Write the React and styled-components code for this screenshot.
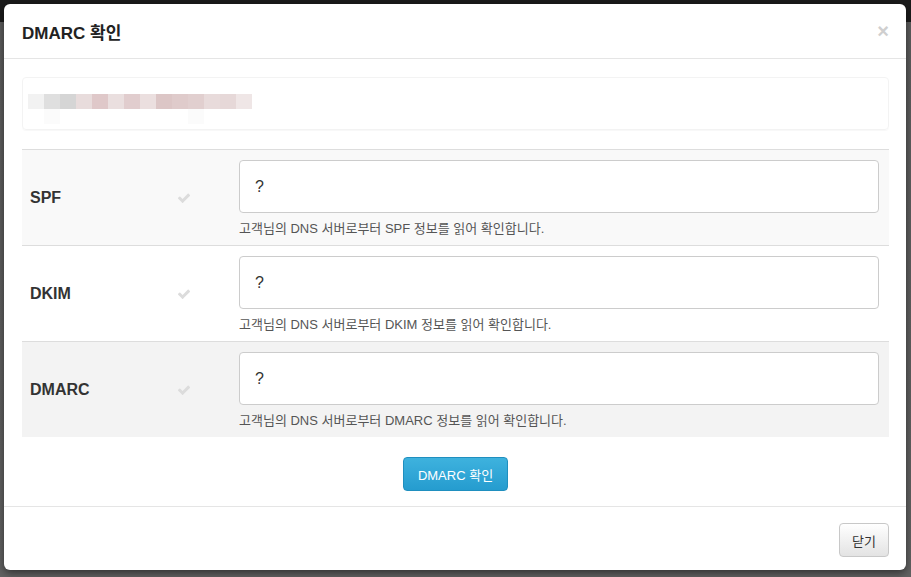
import React from "react";
import styled, { createGlobalStyle } from "styled-components";

const Global = createGlobalStyle`
  html, body { margin: 0; padding: 0; }
  body {
    width: 911px; height: 577px; overflow: hidden;
    background: #5f5f5f;
    font-family: "Liberation Sans", Arial, "Noto Sans CJK KR", sans-serif;
    color: #333;
  }
`;

const Page = styled.div`
  position: relative;
  width: 911px;
  height: 577px;
  display: flex;
  flex-direction: column;
`;

const TopBar = styled.div`
  height: 22px;
  background: #1b1b1b;
`;

const Backdrop = styled.div`
  flex: 1;
  background: linear-gradient(#5d5d5d, #626262);
`;

const Modal = styled.div`
  position: absolute;
  top: 4px;
  left: 4px;
  width: 902px;
  height: 566px;
  background: #fff;
  border-radius: 6px;
  box-shadow: 0 3px 9px rgba(0,0,0,0.5);
  display: flex;
  flex-direction: column;
  overflow: hidden;
`;

const Header = styled.div`
  height: 54px;
  border-bottom: 1px solid #e5e5e5;
  display: flex;
  align-items: center;
  justify-content: space-between;
  padding: 0 18px;
`;

const Title = styled.h4`
  margin: 0;
  font-size: 17px;
  font-weight: 700;
  color: #222;
  padding-top: 1px;
`;

const Close = styled.span`
  font-size: 20px;
  font-weight: 700;
  color: #cfcfcf;
  line-height: 1;
  margin-right: -1px;
`;

const Body = styled.div`
  padding: 18px 17px 15px 18px;
  display: flex;
  flex-direction: column;
  border-bottom: 1px solid #e5e5e5;
`;

const Well = styled.div`
  border: 1px solid #f3f3f3;
  border-radius: 4px;
  box-shadow: 0 1px 1px rgba(0,0,0,0.03);
  display: flex;
  align-items: flex-start;
  padding: 16px 0 0 5px;
  box-sizing: border-box;
  height: 53px;
`;

const Blur = styled.div`
  display: grid;
  grid-template-columns: repeat(14, 16px);
  grid-auto-rows: 15px;
`;

const Pix = styled.span`
  background: ${p => p.$c};
`;

const Table = styled.div`
  margin-top: 19px;
  display: flex;
  flex-direction: column;
`;

const Row = styled.div`
  height: 96px;
  box-sizing: border-box;
  border-top: 1px solid #dddddd;
  background: ${p => p.$bg};
  display: grid;
  grid-template-columns: 140px 77px 1fr;
  align-items: center;
`;

const Label = styled.div`
  padding-left: 8px;
  font-size: 16px;
  font-weight: 700;
  color: #333;
`;

const CheckCell = styled.div`
  display: flex;
  justify-content: flex-start;
  padding-left: 15px;
`;

const Field = styled.div`
  display: flex;
  flex-direction: column;
  padding: 10px 10px 0 0;
  align-self: start;
`;

const Input = styled.div`
  height: 53px;
  box-sizing: border-box;
  border: 1px solid #cccccc;
  border-radius: 4px;
  background: #fff;
  display: flex;
  align-items: center;
  padding: 0 15px;
  font-size: 16px;
  color: #333;
`;

const Help = styled.div`
  margin-top: 5px;
  font-size: 13px;
  color: #555;
`;

const Center = styled.div`
  display: flex;
  justify-content: center;
  margin-top: 20px;
`;

const PrimaryBtn = styled.button`
  width: 105px;
  height: 34px;
  border: 1px solid #1f8fbf;
  border-radius: 4px;
  background: linear-gradient(#3eb2de, #259ccf);
  color: #fff;
  font-family: inherit;
  font-size: 13px;
  padding: 0;
`;

const Footer = styled.div`
  flex: 1;
  display: flex;
  justify-content: flex-end;
  align-items: flex-start;
  padding: 16px 17px 0 0;
`;

const DefaultBtn = styled.button`
  width: 50px;
  height: 34px;
  border: 1px solid #c8c8c8;
  border-radius: 4px;
  background: linear-gradient(#ffffff, #e3e3e3);
  color: #333;
  font-family: inherit;
  font-size: 13px;
  padding: 0;
`;

const Check = () => (
  <svg width="14" height="14" viewBox="0 0 1792 1792">
    <path
      fill="#dcdcdc"
      d="M1671 566q0 40-28 68l-724 724-136 136q-28 28-68 28t-68-28l-136-136-362-362q-28-28-28-68t28-68l136-136q28-28 68-28t68 28l294 295 656-657q28-28 68-28t68 28l136 136q28 28 28 68z"
    />
  </svg>
);

const blurTop = ["#f2f2f2", "#dfdfdf", "#d5d5d5", "#e8dcdc", "#dfc8c9", "#eadfdf", "#e1cdce", "#ebdfdf", "#dcc6c6", "#dfcbcb", "#e1cfcf", "#e8dbdb", "#e6d8d8", "#efe6e6"];
const blurBottom = ["#fff", "#fbfbfb", "#fff", "#fff", "#fff", "#fff", "#fff", "#fff", "#fff", "#fff", "#fbfbfb", "#fff", "#fff", "#fff"];

const rows = [
  { name: "SPF", bg: "#f9f9f9" },
  { name: "DKIM", bg: "#ffffff" },
  { name: "DMARC", bg: "#f3f3f3" },
];

export default function App() {
  return (
    <>
      <Global />
      <Page>
        <TopBar />
        <Backdrop />
        <Modal>
          <Header>
            <Title>DMARC 확인</Title>
            <Close>×</Close>
          </Header>
          <Body>
            <Well>
              <Blur>
                {blurTop.map((c, i) => <Pix key={"t" + i} $c={c} />)}
                {blurBottom.map((c, i) => <Pix key={"b" + i} $c={c} />)}
              </Blur>
            </Well>
            <Table>
              {rows.map(r => (
                <Row key={r.name} $bg={r.bg}>
                  <Label>{r.name}</Label>
                  <CheckCell><Check /></CheckCell>
                  <Field>
                    <Input>?</Input>
                    <Help>고객님의 DNS 서버로부터 {r.name} 정보를 읽어 확인합니다.</Help>
                  </Field>
                </Row>
              ))}
            </Table>
            <Center>
              <PrimaryBtn>DMARC 확인</PrimaryBtn>
            </Center>
          </Body>
          <Footer>
            <DefaultBtn>닫기</DefaultBtn>
          </Footer>
        </Modal>
      </Page>
    </>
  );
}
